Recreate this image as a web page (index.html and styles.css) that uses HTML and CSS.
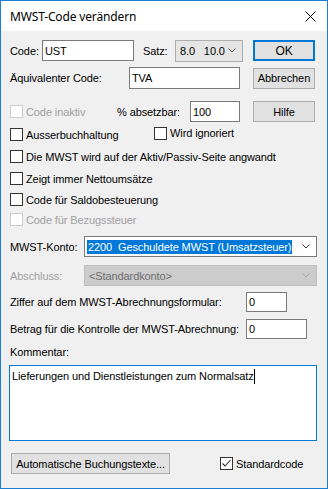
FILE: index.html
```html
<!DOCTYPE html>
<html lang="de">
<head>
    <meta charset="UTF-8">
    <title>MWST-Code verändern</title>
    <link rel="stylesheet" href="styles.css">
</head>
<body>
    <div class="window">
        <div class="titlebar">
            <span class="title">MWST-Code verändern</span>
            <svg class="close" width="11" height="11" viewBox="0 0 11 11"><path d="M0.5 0.5L10.5 10.5M10.5 0.5L0.5 10.5" stroke="#000" stroke-width="1"/></svg>
        </div>
        <div class="content">
            <div class="row r1">
                <span class="lbl w-code">Code:</span>
                <div class="field w-ust">UST</div>
                <span class="lbl w-satz">Satz:</span>
                <div class="combo combo-list w-satzbox"><span>8.0&nbsp;&nbsp;&nbsp;10.0</span><svg class="chev" width="8" height="5" viewBox="0 0 8 5"><path d="M0.5 0.5L4 4L7.5 0.5" fill="none" stroke="#555"/></svg></div>
                <div class="btn btn-default">OK</div>
            </div>
            <div class="row r2">
                <span class="lbl w-aequiv">Äquivalenter Code:</span>
                <div class="field w-tva">TVA</div>
                <div class="btn btn-gap">Abbrechen</div>
            </div>
            <div class="row r3">
                <div class="check disabled w-inaktiv"><span class="box"></span>Code inaktiv</div>
                <span class="lbl w-abs">% absetzbar:</span>
                <div class="field w-100">100</div>
                <div class="btn btn-gap">Hilfe</div>
            </div>
            <div class="row r4">
                <div class="check w-ausser"><span class="box"></span>Ausserbuchhaltung</div>
                <div class="check raised"><span class="box"></span>Wird ignoriert</div>
            </div>
            <div class="row r5">
                <div class="check"><span class="box"></span>Die MWST wird auf der Aktiv/Passiv-Seite angwandt</div>
            </div>
            <div class="row r6">
                <div class="check"><span class="box"></span>Zeigt immer Nettoumsätze</div>
            </div>
            <div class="row r7">
                <div class="check"><span class="box"></span>Code für Saldobesteuerung</div>
            </div>
            <div class="row r8">
                <div class="check disabled"><span class="box"></span>Code für Bezugssteuer</div>
            </div>
            <div class="row r9">
                <span class="lbl w-konto">MWST-Konto:</span>
                <div class="combo w-kontobox"><span class="selected">2200&nbsp; Geschuldete MWST (Umsatzsteuer)</span><svg class="chev" width="8" height="5" viewBox="0 0 8 5"><path d="M0.5 0.5L4 4L7.5 0.5" fill="none" stroke="#333"/></svg></div>
            </div>
            <div class="row r10">
                <span class="lbl w-konto grey">Abschluss:</span>
                <div class="combo combo-off w-kontobox"><span>&lt;Standardkonto&gt;</span><svg class="chev" width="8" height="5" viewBox="0 0 8 5"><path d="M0.5 0.5L4 4L7.5 0.5" fill="none" stroke="#a8a8a8"/></svg></div>
            </div>
            <div class="row r11">
                <span class="lbl w-long">Ziffer auf dem MWST-Abrechnungsformular:</span>
                <div class="field w-ziffer">0</div>
            </div>
            <div class="row r12">
                <span class="lbl w-long">Betrag für die Kontrolle der MWST-Abrechnung:</span>
                <div class="field w-betrag">0</div>
            </div>
            <div class="row r13">
                <span class="lbl">Kommentar:</span>
            </div>
            <div class="memo">Lieferungen und Dienstleistungen zum Normalsatz<span class="caret"></span></div>
            <div class="row r15">
                <div class="btn w-auto">Automatische Buchungstexte...</div>
                <div class="check checked w-std"><span class="box"><svg width="11" height="11" viewBox="0 0 11 11"><path d="M1.5 5.5L4 8L9.5 2" fill="none" stroke="#333" stroke-width="1.1"/></svg></span>Standardcode</div>
            </div>
        </div>
    </div>
</body>
</html>
```

FILE: styles.css
```css
html, body {
    margin: 0;
    padding: 0;
}

body {
    font-family: 'Liberation Sans', Arial, sans-serif;
    font-size: 11px;
    letter-spacing: -0.1px;
    color: #000;
    background: #ffffff;
}

.window {
    width: 328px;
    height: 489px;
    box-sizing: border-box;
    border: 1px solid #1a7fd4;
    display: flex;
    flex-direction: column;
}

.titlebar {
    height: 30px;
    flex: none;
    background: #fff;
    display: flex;
    align-items: center;
    padding: 0 11px 0 9px;
}

.title {
    font-family: 'Noto Sans', 'Open Sans', sans-serif;
    font-size: 12px;
    letter-spacing: -0.15px;
    flex: 1;
}

.close {
    display: block;
}

.content {
    flex: 1;
    background: #f0f0f0;
    padding: 0 9px;
}

.row {
    display: flex;
    align-items: center;
    white-space: nowrap;
}

/* vertical rhythm of the dialog rows */
.r1 { margin-top: 9px; height: 21px; }
.r2 { margin-top: 6px; height: 22px; }
.r3 { margin-top: 12px; height: 21px; }
.r4 { margin-top: 5px; height: 15px; }
.r5 { margin-top: 7px; height: 15px; }
.r6 { margin-top: 7px; height: 15px; }
.r7 { margin-top: 6px; height: 15px; }
.r8 { margin-top: 5px; height: 15px; }
.r9 { margin-top: 9px; height: 21px; }
.r10 { margin-top: 8px; height: 21px; }
.r11 { margin-top: 6px; height: 20px; }
.r12 { margin-top: 7px; height: 20px; }
.r13 { margin-top: 6px; height: 14px; }
.r15 { margin-top: 12px; height: 21px; }

.lbl { flex: none; }
.grey { color: #a0a0a0; }

.w-code { width: 32px; }
.w-satz { width: 32px; margin-left: 9px; }
.w-aequiv { width: 119px; }
.w-abs { width: 73px; }
.w-konto { width: 74px; }
.w-long { width: 236px; }

.field {
    box-sizing: border-box;
    height: 100%;
    background: #fff;
    border: 1px solid #7a7a7a;
    padding-left: 2px;
    display: flex;
    align-items: center;
    flex: none;
}

.w-ust { width: 92px; }
.w-tva { width: 111px; }
.w-100 { width: 50px; }
.w-ziffer { width: 41px; }
.w-betrag { width: 61px; }

.combo {
    box-sizing: border-box;
    height: 100%;
    background: #fff;
    border: 1px solid #7a7a7a;
    padding: 0 6px 0 2px;
    display: flex;
    align-items: center;
    justify-content: space-between;
    flex: none;
}

.combo-list {
    background: #e5e5e5;
    border-color: #adadad;
    padding-left: 4px;
    height: 22px;
}

.combo-off {
    background: #cccccc;
    border-color: #bfbfbf;
    color: #6d6d6d;
    padding-left: 4px;
}

.w-satzbox { width: 68px; }
.w-kontobox { width: 233px; }

.selected {
    background: #0078d7;
    color: #fff;
    padding: 1px 1px 0;
    line-height: 13px;
}

.btn {
    box-sizing: border-box;
    width: 62px;
    height: 21px;
    background: #e1e1e1;
    border: 1px solid #adadad;
    display: flex;
    align-items: center;
    justify-content: center;
    flex: none;
}

.btn-default {
    margin-left: 10px;
    border: 2px solid #0078d7;
    font-size: 12px;
}

.btn-gap { margin-left: 13px; }

.w-auto {
    width: 159px;
    margin-left: 1px;
}

.check {
    display: flex;
    align-items: center;
    flex: none;
}

.check .box {
    box-sizing: border-box;
    width: 13px;
    height: 13px;
    border: 1px solid #333;
    background: #fff;
    margin-right: 3px;
    display: flex;
    align-items: center;
    justify-content: center;
}

.check.disabled { color: #a0a0a0; }
.check.disabled .box { border-color: #cccccc; }

.raised { margin-top: -3px; }

.w-inaktiv { width: 107px; }
.w-ausser { width: 144px; }
.w-std { margin-left: 50px; }

.memo {
    box-sizing: border-box;
    margin-top: 6px;
    margin-left: -1px;
    width: 308px;
    height: 76px;
    background: #fff;
    border: 1px solid #0078d7;
    padding: 3px 2px;
    line-height: 14px;
}

.caret {
    display: inline-block;
    width: 1px;
    height: 15px;
    background: #000;
    vertical-align: top;
}
```
